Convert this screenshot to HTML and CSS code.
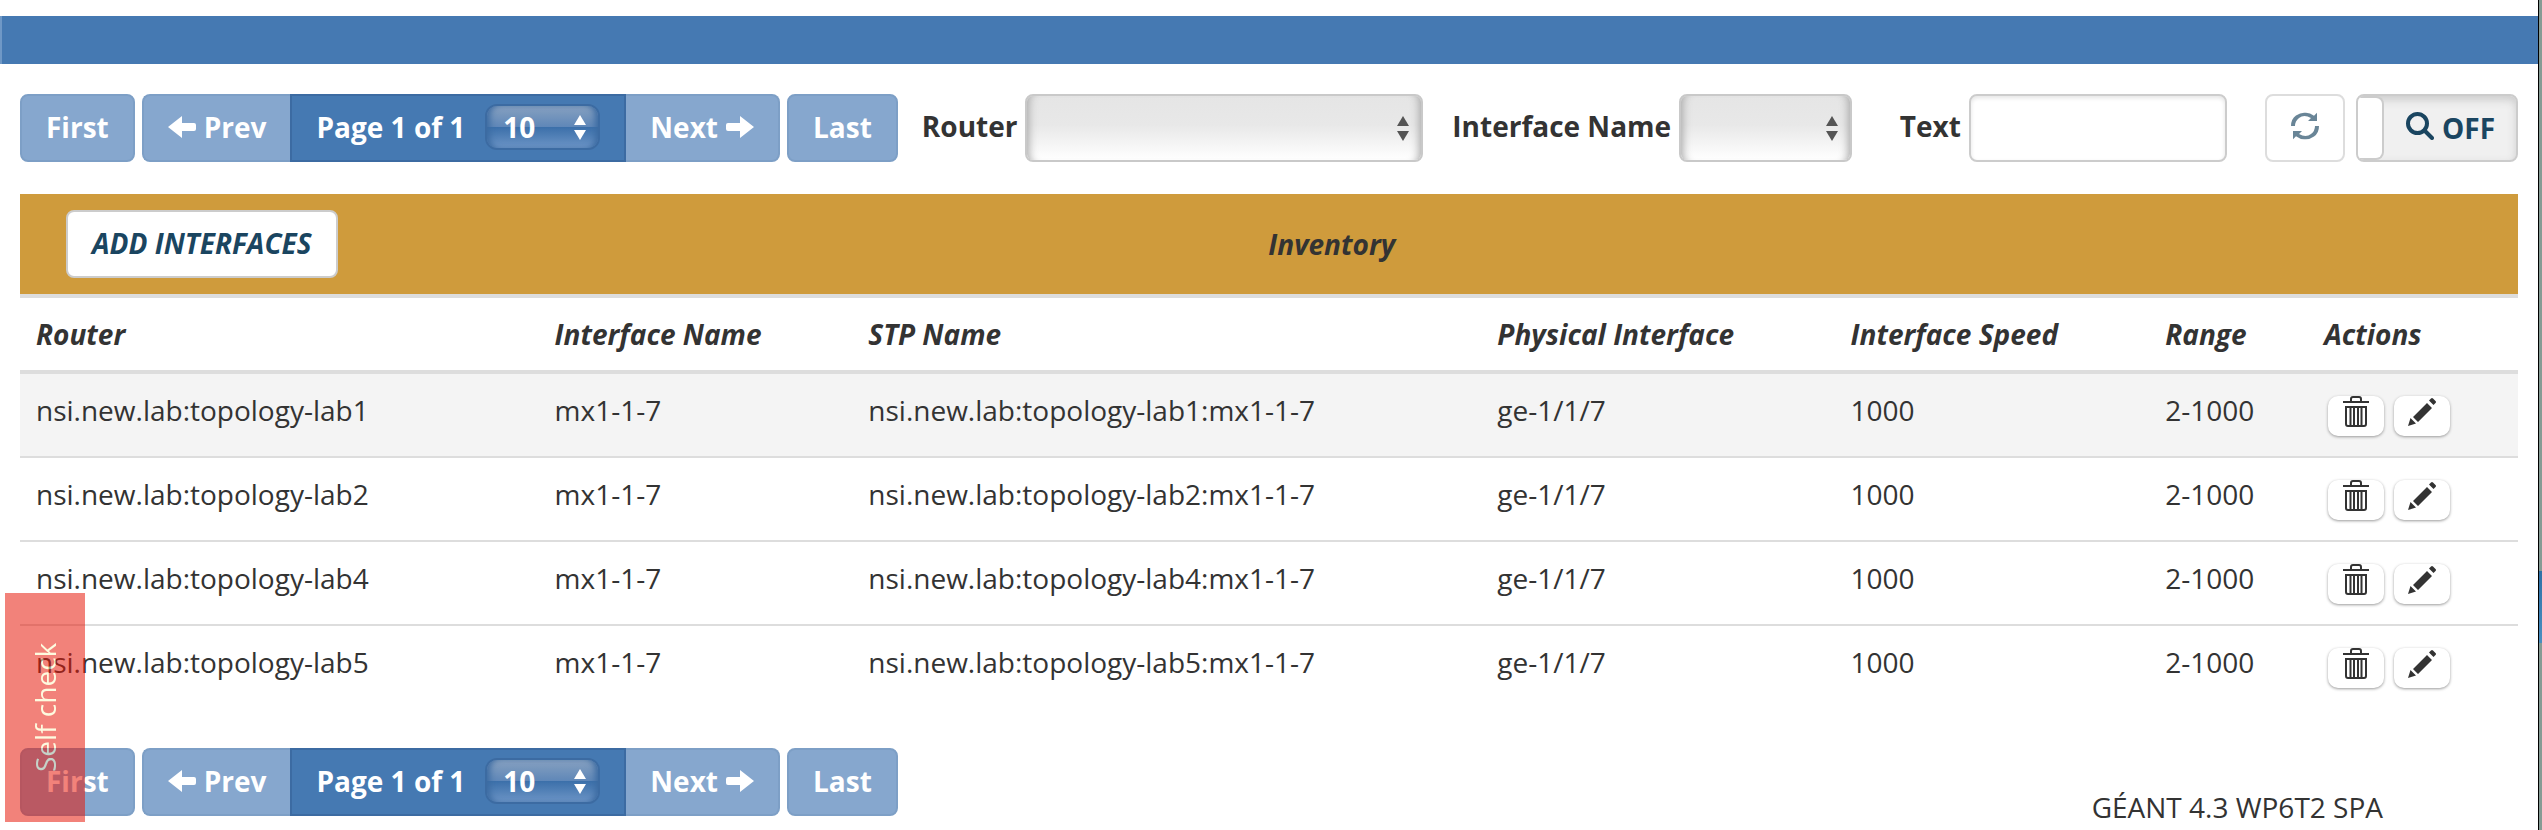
FILE: index.html
```html
<!DOCTYPE html>
<html lang="en">
<head>
<meta charset="utf-8">
<title>Inventory</title>
<link rel="stylesheet" href="styles.css">
</head>
<body>
<svg class="defs" aria-hidden="true">
  <symbol id="left" viewBox="0 0 28 22"><path d="M14 0v7h12q2 0 2 2v4q0 2-2 2H14v7L0 11z"/></symbol>
  <symbol id="right" viewBox="0 0 28 22"><path d="M14 0v7H2q-2 0-2 2v4q0 2 2 2h12v7l14-11z"/></symbol>
  <symbol id="trash" viewBox="0 0 26 31"><path fill="none" stroke="currentColor" stroke-width="2" d="M8 6V3q0-2 2-2h6q2 0 2 2v3M0 6h26M3 11h20v17q0 2-2 2H5q-2 0-2-2zM7.500 11v18M11 11v18M15 11v18M18.500 11v18"/></symbol>
  <symbol id="pencil" viewBox="0 0 28 30"><path d="M0 30l2.500-8 5.500 5.500zM5 21L19 7l5 5L10 26zM21 4.500l2-2q1-1 2 0l2.500 2.500q1 1 0 2l-2 2z"/></symbol>
</svg>
<div class="window">
  <header class="topbar"></header>
  <main class="content">
    <div class="toolbar">
      <nav class="pager" aria-label="Pages">
        <button class="btn" type="button">First</button>
        <div class="group">
          <button class="btn" type="button"><svg class="arrow"><use href="#left"/></svg>Prev</button>
          <label class="page">Page 1 of 1
            <span class="picker picker-size"><select class="size"><option>10</option></select></span>
          </label>
          <button class="btn" type="button">Next<svg class="arrow"><use href="#right"/></svg></button>
        </div>
        <button class="btn" type="button">Last</button>
      </nav>
      <div class="filters">
        <label class="field field-router"><span class="caption">Router</span><span class="picker"><select class="select"><option></option></select></span></label>
        <label class="field field-name"><span class="caption">Interface Name</span><span class="picker"><select class="select"><option></option></select></span></label>
        <label class="field field-text"><span class="caption">Text</span><input class="input" type="text"></label>
      </div>
      <div class="tools">
        <button class="refresh" type="button" aria-label="Refresh"><svg class="sync" viewBox="0 0 28 28"><path d="M0 14Q0 7 5 3.500T15 .8q4 0 8 3l3-3V9h-9l3-3q-7-4-12 0-4 3-4 8zM28 14q0 7-5 10.500T13 27.200q-4 0-8-3l-3 3V19h9l-3 3q7 4 12 0 4-3 4-8z"/></svg></button>
        <button class="toggle" type="button"><span class="knob"></span><span class="state"><svg class="lens" viewBox="0 0 28 28"><circle cx="11.500" cy="11.500" r="9.500"/><path d="M18.500 18.500L26 26"/></svg>OFF</span></button>
      </div>
    </div>
    <table class="grid">
      <colgroup><col class="c1"><col class="c2"><col class="c3"><col class="c4"><col class="c5"><col class="c6"><col class="c7"></colgroup>
      <thead>
        <tr><th class="banner" colspan="7"><div class="banner-row"><button class="add" type="button">ADD INTERFACES</button><span class="title">Inventory</span></div></th></tr>
        <tr class="heads"><th>Router</th><th>Interface Name</th><th>STP Name</th><th>Physical Interface</th><th>Interface Speed</th><th>Range</th><th>Actions</th></tr>
      </thead>
      <tbody>
        <tr><td>nsi.new.lab:topology-lab1</td><td>mx1-1-7</td><td>nsi.new.lab:topology-lab1:mx1-1-7</td><td>ge-1/1/7</td><td>1000</td><td>2-1000</td><td><div class="actions"><button class="act" type="button" aria-label="Delete"><svg class="trash"><use href="#trash"/></svg></button><button class="act" type="button" aria-label="Edit"><svg class="pencil"><use href="#pencil"/></svg></button></div></td></tr>
        <tr><td>nsi.new.lab:topology-lab2</td><td>mx1-1-7</td><td>nsi.new.lab:topology-lab2:mx1-1-7</td><td>ge-1/1/7</td><td>1000</td><td>2-1000</td><td><div class="actions"><button class="act" type="button" aria-label="Delete"><svg class="trash"><use href="#trash"/></svg></button><button class="act" type="button" aria-label="Edit"><svg class="pencil"><use href="#pencil"/></svg></button></div></td></tr>
        <tr><td>nsi.new.lab:topology-lab4</td><td>mx1-1-7</td><td>nsi.new.lab:topology-lab4:mx1-1-7</td><td>ge-1/1/7</td><td>1000</td><td>2-1000</td><td><div class="actions"><button class="act" type="button" aria-label="Delete"><svg class="trash"><use href="#trash"/></svg></button><button class="act" type="button" aria-label="Edit"><svg class="pencil"><use href="#pencil"/></svg></button></div></td></tr>
        <tr><td>nsi.new.lab:topology-lab5</td><td>mx1-1-7</td><td>nsi.new.lab:topology-lab5:mx1-1-7</td><td>ge-1/1/7</td><td>1000</td><td>2-1000</td><td><div class="actions"><button class="act" type="button" aria-label="Delete"><svg class="trash"><use href="#trash"/></svg></button><button class="act" type="button" aria-label="Edit"><svg class="pencil"><use href="#pencil"/></svg></button></div></td></tr>
      </tbody>
    </table>
    <div class="bottom">
      <nav class="pager" aria-label="Pages">
        <button class="btn" type="button">First</button>
        <div class="group">
          <button class="btn" type="button"><svg class="arrow"><use href="#left"/></svg>Prev</button>
          <label class="page">Page 1 of 1
            <span class="picker picker-size"><select class="size"><option>10</option></select></span>
          </label>
          <button class="btn" type="button">Next<svg class="arrow"><use href="#right"/></svg></button>
        </div>
        <button class="btn" type="button">Last</button>
      </nav>
      <footer class="credit">GÉANT 4.3 WP6T2 SPA</footer>
    </div>
  </main>
</div>
<button class="selfcheck" type="button">Self check</button>
</body>
</html>
```
FILE: styles.css
```css
* { box-sizing: border-box; }
body {
  margin: 0;
  overflow: hidden;
  background: linear-gradient(#869b94 571px, #2f71a6 571px, #4a8fc0 643px, #869b94 643px);
  color: #333;
  font: 28px/40px "Open Sans", "Noto Sans", sans-serif;
}
button, select, input { font: inherit; color: inherit; margin: 0; }
svg { display: block; fill: currentColor; flex: none; }
.defs { position: absolute; width: 0; height: 0; }
.window {
  min-height: 100vh;
  margin-right: 3px;
  padding-top: 16px;
  border-right: 1px solid #000;
  background: #fff;
}
.topbar { height: 48px; background: #4579b2; border-left: 2px solid #6f98c6; }
.content { padding: 30px 20px 0; }
.toolbar { display: flex; align-items: center; height: 68px; }
.pager { display: flex; gap: 7px; height: 68px; font-weight: 700; color: #fff; }
.group { display: flex; }
.btn {
  display: flex;
  align-items: center;
  gap: 8px;
  padding: 0 24px 2px;
  border: 2px solid #7d9fc6;
  border-radius: 8px;
  background: #86a7ce;
}
.group .btn:first-child { border-right: 0; border-radius: 8px 0 0 8px; }
.group .btn:last-child { border-left: 0; border-radius: 0 8px 8px 0; }
.arrow { width: 28px; height: 22px; }
.page {
  display: flex;
  align-items: center;
  gap: 20px;
  padding: 0 24px 2px;
  border: 2px solid #3c6ba2;
  background: #4579b2;
}
.picker { display: block; position: relative; }
.picker::before, .picker::after {
  content: "";
  position: absolute;
  right: 14px;
  border: 6px solid transparent;
  pointer-events: none;
}
.picker::before { bottom: 50%; margin-bottom: 2px; border-top: 0; border-bottom: 10px solid #555; }
.picker::after { top: 50%; margin-top: 3px; border-bottom: 0; border-top: 10px solid #555; }
.picker-size::before { border-bottom-color: #fff; }
.picker-size::after { border-top-color: #fff; }
.size {
  display: block;
  width: 115px;
  height: 46px;
  padding: 0 16px;
  appearance: none;
  border: 2px solid #3c6ba2;
  border-radius: 12px;
  background: linear-gradient(#87a1c0, #5f87b8 50%, #3c70aa 51%, #6d95c6);
  box-shadow: inset 6px 0 6px -3px #3c6ba2, inset -6px 0 6px -3px #3c6ba2;
}
.filters { display: flex; flex: 1; margin-left: 24px; font-weight: 700; }
.field { display: flex; align-items: center; gap: 8px; min-width: 0; white-space: nowrap; }
.field-router { flex: 501 1 0; }
.field-name { flex: 399 1 0; margin-left: 29px; }
.field-text { flex: 327 1 0; margin-left: 48px; }
.caption { padding-bottom: 4px; }
.field .picker { flex: 1; }
.select {
  display: block;
  width: 100%;
  height: 68px;
  appearance: none;
  border: 2px solid #c9c9c9;
  border-radius: 8px;
  background: linear-gradient(#e5e5e5, #e8e8e8 45%, #fff);
  box-shadow: inset 10px 0 8px -8px #aaa, inset -10px 0 8px -8px #aaa;
}
.input {
  flex: 1;
  min-width: 0;
  height: 68px;
  border: 2px solid #ccc;
  border-radius: 8px;
  background: #fff;
  box-shadow: inset 0 2px 4px #e4e4e4;
}
.tools { display: flex; gap: 11px; margin-left: 38px; color: #1a4560; }
.refresh {
  display: grid;
  place-items: center;
  width: 80px;
  height: 68px;
  padding: 0 0 4px;
  border: 2px solid #ccc;
  border-radius: 8px;
  background: #fff;
  opacity: .65;
}
.sync { width: 28px; height: 28px; }
.toggle {
  display: flex;
  width: 162px;
  height: 68px;
  padding: 0;
  overflow: hidden;
  border: 2px solid #ccc;
  border-radius: 8px;
  background: #f0f0f0;
  box-shadow: inset 0 4px 8px #ccc;
  font-weight: 700;
}
.knob { width: 26px; height: 64px; border: 2px solid #ccc; border-left: 0; border-radius: 0 8px 8px 0; background: #fff; }
.state { display: flex; flex: 1; align-items: center; align-self: stretch; gap: 8px; padding-left: 22px; }
.lens { width: 28px; height: 28px; margin-bottom: 4px; fill: none; stroke: currentColor; stroke-width: 4; stroke-linecap: round; }
.grid { width: 100%; margin-top: 32px; border-collapse: separate; border-spacing: 0; table-layout: fixed; text-align: left; }
.c1 { width: 20.76%; }
.c2 { width: 12.56%; }
.c3 { width: 25.18%; }
.c4 { width: 14.14%; }
.c5 { width: 12.6%; }
.c6 { width: 6.36%; }
.c7 { width: 8.4%; }
th { font-style: italic; }
.banner { padding: 16px 192px 16px 46px; background: #cf9b3c; border-bottom: 4px solid #ddd; }
.banner-row { display: flex; align-items: center; }
.title { flex: 1; text-align: center; }
.add {
  height: 68px;
  padding: 0 24px 2px;
  border: 2px solid #ccc;
  border-radius: 8px;
  background: #fff;
  color: #1a4560;
}
.heads th { height: 76px; padding: 16px; border-bottom: 4px solid #ddd; vertical-align: top; }
td { height: 84px; padding: 16px; border-bottom: 2px solid #ddd; vertical-align: top; }
tbody tr:first-child td { background: #f4f4f4; }
tbody tr:last-child td { border-bottom: 0; }
.actions { display: flex; gap: 10px; padding: 6px 4px 0; }
.act {
  display: flex;
  justify-content: center;
  width: 56px;
  height: 40px;
  padding: 0;
  border: 0;
  border-radius: 10px;
  background: #fff;
  box-shadow: 0 1px 3px #999;
}
.trash { width: 26px; height: 31px; }
.pencil { width: 28px; height: 30px; }
.bottom { display: flex; justify-content: space-between; align-items: flex-start; margin-top: 38px; }
.credit { margin: 39px 135px 0 0; }
.selfcheck {
  position: fixed;
  left: 5px;
  bottom: 8px;
  width: 80px;
  height: 229px;
  padding: 0;
  border: 0;
  background: #e7180b;
  opacity: .54;
  color: #fbf7c4;
  writing-mode: vertical-rl;
  rotate: 180deg;
}
```
